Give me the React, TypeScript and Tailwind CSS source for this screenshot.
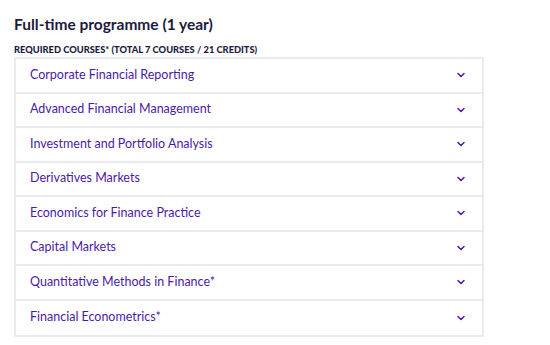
import { ChevronDown } from 'lucide-react';

const courses = [
  'Corporate Financial Reporting',
  'Advanced Financial Management',
  'Investment and Portfolio Analysis',
  'Derivatives Markets',
  'Economics for Finance Practice',
  'Capital Markets',
  'Quantitative Methods in Finance*',
  'Financial Econometrics*',
];

const App = () => {
  return (
    <div className="w-[550px] h-[345px] bg-white pl-[14px] pt-[14px] font-['Lato',sans-serif]">
      <h1 className="text-[15.5px] leading-[20px] font-bold text-[#1c1a3d]">Full-time programme (1 year)</h1>
      <h2 className="mt-[10px] text-[9.3px] leading-[12px] font-black uppercase text-[#1c1a3d]">
        Required courses* (total 7 courses / 21 credits)
      </h2>
      <div className="mt-[1px] w-[470px] border-2 border-[#ebebef]">
        {courses.map((c) => (
          <div
            key={c}
            className="h-[34.5px] flex items-center justify-between pl-[14px] pr-[15px] border-b-2 border-[#ebebef] last:border-b-0"
          >
            <span className="text-[12.5px] text-[#4b1aa6]">{c}</span>
            <ChevronDown className="w-[12px] h-[12px] text-[#4b1aa6]" strokeWidth={3} />
          </div>
        ))}
      </div>
    </div>
  );
};

export default App;
